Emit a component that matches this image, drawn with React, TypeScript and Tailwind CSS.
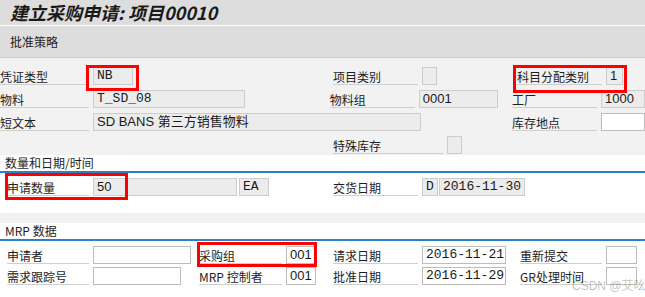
import React from "react";

const cjk = "font-['Noto_Sans_CJK_SC',sans-serif]";
const mono = "font-['Liberation_Mono','Noto_Sans_CJK_SC',monospace]";
const sans = "font-['Liberation_Sans','Noto_Sans_CJK_SC',sans-serif]";

function Label({ w, children, className = "" }: { w: string; children?: React.ReactNode; className?: string }) {
  return (
    <div className={`${w} shrink-0 h-[18px] pr-[2px]`}>
      <div
        className={`h-full mr-[2px] border-b border-[#cfcfcf] text-[12px] leading-[19px] text-[#1e1e1e] whitespace-nowrap ${cjk} ${className}`}
      >
        {children}
      </div>
    </div>
  );
}

function Box({
  w,
  children,
  white,
  font = mono,
}: {
  w: string;
  children?: React.ReactNode;
  white?: boolean;
  font?: string;
}) {
  return (
    <div
      className={`${w} shrink-0 h-[18px] border ${
        white ? "bg-white border-[#bdbdbd]" : "bg-[#ececec] border-[#cdcdcd]"
      } px-[3px] text-[13px] leading-[16px] text-[#1a1a1a] whitespace-nowrap overflow-hidden ${font}`}
    >
      {children}
    </div>
  );
}

function SectionHead({ children }: { children: React.ReactNode }) {
  return (
    <div className="bg-white border-b-2 border-[#2a80c8]">
      <div className={`pl-[5px] h-[16px] text-[12px] leading-[16px] text-[#1e1e1e] ${cjk}`}>{children}</div>
    </div>
  );
}

export default function App() {
  return (
    <div className="relative w-[645px] h-[297px] overflow-hidden bg-[#f2f2f2]">
      {/* title */}
      <div className="h-[26px] bg-[#dddddd] border-b border-white flex items-center pl-[10px]">
        <span className={`text-[18px] font-bold italic text-[#1a1a1a] ${cjk}`}>建立采购申请: 项目00010</span>
      </div>
      <div className="h-[32px] bg-[#dddddd] border-b border-[#d0d0d0] flex items-center pl-[10px]">
        <span className={`text-[12px] text-[#1e1e1e] ${cjk}`}>批准策略</span>
      </div>

      {/* header data */}
      <div className="pt-[9px] h-[97px] flex flex-col gap-[5px]">
        <div className="flex">
          <div className="w-[333px] flex">
            <Label w="w-[93px]">凭证类型</Label>
            <Box w="w-[40px]">NB</Box>
          </div>
          <div className="w-[184px] flex">
            <Label w="w-[89px]">项目类别</Label>
            <Box w="w-[15px]" />
          </div>
          <div className="flex">
            <Label w="w-[89px]">科目分配类别</Label>
            <Box w="w-[17px]" font={sans}>1</Box>
          </div>
        </div>
        <div className="flex">
          <div className="w-[333px] flex">
            <Label w="w-[93px]">物料</Label>
            <Box w="w-[152px]">T_SD_08</Box>
          </div>
          <div className="w-[184px] flex">
            <Label w="w-[89px]">物料组</Label>
            <Box w="w-[79px]" font={sans}>0001</Box>
          </div>
          <div className="flex">
            <Label w="w-[89px]">工厂</Label>
            <Box w="w-[44px]" font={sans}>1000</Box>
          </div>
        </div>
        <div className="flex">
          <div className="w-[517px] flex">
            <Label w="w-[93px]">短文本</Label>
            <Box w="w-[328px]" font={sans}>SD BANS 第三方销售物料</Box>
          </div>
          <div className="flex">
            <Label w="w-[89px]">库存地点</Label>
            <Box w="w-[44px]" white />
          </div>
        </div>
        <div className="flex">
          <div className="w-[333px]" />
          <div className="flex">
            <Label w="w-[114px]">特殊库存</Label>
            <Box w="w-[15px]" />
          </div>
        </div>
      </div>

      {/* quantity and date */}
      <div className="bg-white h-[58px]">
        <SectionHead>数量和日期/时间</SectionHead>
        <div className="flex pt-[5px] pl-[7px]">
          <div className="w-[326px] flex">
            <Label w="w-[86px]">申请数量</Label>
            <Box w="w-[144px]" font={sans}>50</Box>
            <div className="w-[2px]" />
            <Box w="w-[30px]">EA</Box>
          </div>
          <div className="flex">
            <Label w="w-[89px]">交货日期</Label>
            <Box w="w-[16px]">D</Box>
            <div className="w-[1px]" />
            <Box w="w-[86px]">2016-11-30</Box>
          </div>
        </div>
      </div>

      <div className="h-[10px]" />

      {/* MRP */}
      <div className="bg-white h-[74px]">
        <SectionHead>MRP 数据</SectionHead>
        <div className="pt-[5px] pl-[7px] flex flex-col gap-[3px]">
          <div className="flex">
            <div className="w-[192px] flex">
              <Label w="w-[86px]">申请者</Label>
              <Box w="w-[98px]" white />
            </div>
            <div className="w-[134px] flex">
              <Label w="w-[87px]">采购组</Label>
              <Box w="w-[30px]" white font={sans}>001</Box>
            </div>
            <div className="w-[187px] flex">
              <Label w="w-[89px]">请求日期</Label>
              <Box w="w-[84px]" white>2016-11-21</Box>
            </div>
            <div className="flex">
              <Label w="w-[86px]">重新提交</Label>
              <Box w="w-[31px]" white />
            </div>
          </div>
          <div className="flex">
            <div className="w-[192px] flex">
              <Label w="w-[86px]">需求跟踪号</Label>
              <Box w="w-[88px]" white />
            </div>
            <div className="w-[134px] flex">
              <Label w="w-[87px]">MRP 控制者</Label>
              <Box w="w-[30px]" white font={sans}>001</Box>
            </div>
            <div className="w-[187px] flex">
              <Label w="w-[89px]">批准日期</Label>
              <Box w="w-[84px]" white>2016-11-29</Box>
            </div>
            <div className="flex">
              <Label w="w-[86px]">GR处理时间</Label>
              <Box w="w-[31px]" white />
            </div>
          </div>
        </div>
      </div>

      {/* red annotation boxes */}
      <div className="absolute left-[86px] top-[65px] w-[53px] h-[26px] border-[3px] border-[#ff0000]" />
      <div className="absolute left-[513px] top-[65px] w-[114px] h-[28px] border-[3px] border-[#ff0000]" />
      <div className="absolute left-[5px] top-[173px] w-[123px] h-[27px] border-[3px] border-[#ff0000]" />
      <div className="absolute left-[197px] top-[242px] w-[120px] h-[25px] border-[3px] border-[#ff0000]" />

      {/* watermark */}
      <div className={`absolute left-[572px] top-[277px] whitespace-nowrap text-[12px] text-[#000000]/25 ${sans}`}>
        CSDN @艾吆
      </div>
    </div>
  );
}
